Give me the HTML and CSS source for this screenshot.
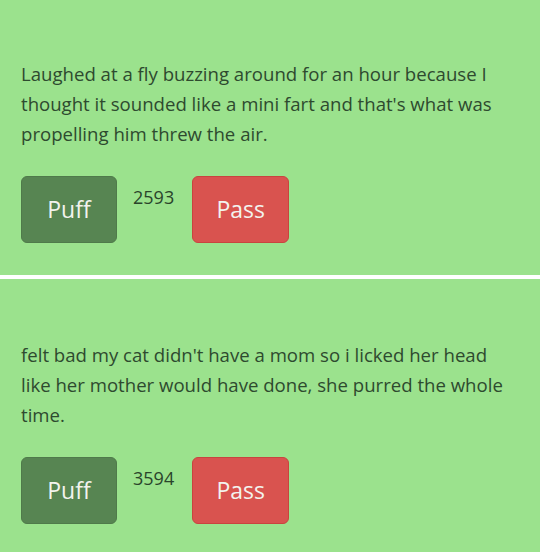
FILE: index.html
```html
<!DOCTYPE html>
<html lang="en">
<head>
<meta charset="utf-8">
<title>Confessions</title>
<link rel="stylesheet" href="styles.css">
</head>
<body>
<div class="feed">
  <article class="card">
    <p class="story">Laughed at a fly buzzing around for an hour because I thought it sounded like a mini fart and that's what was propelling him threw the air.</p>
    <div class="actions">
      <button class="btn btn-puff">Puff</button>
      <span class="count">2593</span>
      <button class="btn btn-pass">Pass</button>
    </div>
  </article>
  <article class="card">
    <p class="story">felt bad my cat didn't have a mom so i licked her head like her mother would have done, she purred the whole time.</p>
    <div class="actions">
      <button class="btn btn-puff">Puff</button>
      <span class="count">3594</span>
      <button class="btn btn-pass">Pass</button>
    </div>
  </article>
</div>
</body>
</html>
```
FILE: styles.css
```css
html, body {
  margin: 0;
  padding: 0;
  background: #ffffff;
}
body {
  font-family: "Open Sans", "Noto Sans", sans-serif;
  color: #2e4a2f;
}
.feed {
  display: flex;
  flex-direction: column;
  gap: 4px;
  margin-top: -2px;
}
.card {
  background: #9be28d;
  height: 277px;
  padding: 61px 21px 0 21px;
  box-sizing: border-box;
}
.story {
  margin: 0;
  font-size: 18.6px;
  line-height: 30px;
  color: #2e4a2f;
}
.actions {
  display: flex;
  align-items: flex-start;
  gap: 16px;
  margin-top: 27px;
}
.btn {
  height: 67px;
  border-radius: 6px;
  font-family: "Open Sans", "Noto Sans", sans-serif;
  font-size: 23px;
  color: #f3f3ee;
  padding: 0 0 2px 0;
  cursor: pointer;
}
.btn-puff {
  width: 96px;
  background: #578552;
  border: 1px solid #4f7a4a;
}
.btn-pass {
  width: 97px;
  background: #d9534f;
  border: 1px solid #c9443f;
}
.count {
  font-size: 18px;
  padding-top: 10px;
  padding-right: 2px;
  line-height: 22px;
  color: #2a442b;
}
```
